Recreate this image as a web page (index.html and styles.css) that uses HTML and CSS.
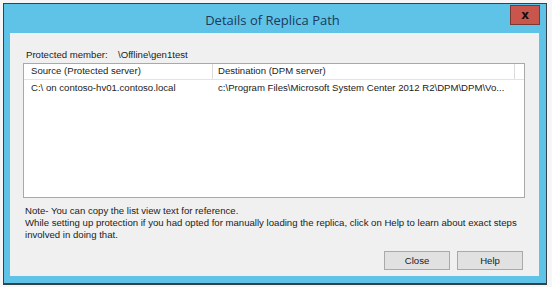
FILE: index.html
```html
<!DOCTYPE html>
<html lang="en">
<head>
  <meta charset="UTF-8" />
  <title>Details of Replica Path</title>
  <link rel="stylesheet" href="styles.css">
</head>
<body>
  <div class="window">
    <div class="titlebar">
      <span></span>
      <h1 class="title">Details of Replica Path</h1>
      <button class="close-x">x</button>
    </div>
    <div class="content">
      <div class="member">
        <span class="member-label">Protected member:</span>
        <span>\Offline\gen1test</span>
      </div>
      <div class="listview">
        <div class="lv-head">
          <div class="col col-src">Source (Protected server)</div>
          <div class="col col-dst">Destination (DPM server)</div>
          <div class="col col-end"></div>
        </div>
        <div class="lv-row">
          <div class="col col-src">C:\ on contoso-hv01.contoso.local</div>
          <div class="col col-dst">c:\Program Files\Microsoft System Center 2012 R2\DPM\DPM\Vo...</div>
        </div>
      </div>
      <p class="note">Note- You can copy the list view text for reference.<br>
        While setting up protection if you had opted for manually loading the replica, click on Help to learn about exact steps involved in doing that.</p>
      <div class="buttons">
        <button class="btn">Close</button>
        <button class="btn">Help</button>
      </div>
    </div>
  </div>
</body>
</html>
```

FILE: styles.css
```css
body {
  margin: 0;
  background-color: #f6f6f6;
  font-family: "Liberation Sans", Arial, sans-serif;
  font-size: 9.6px;
  color: #222;
}

.window {
  margin: 3px 5px 0 3px;
  height: 282px;
  box-sizing: border-box;
  border: 1px solid #34424c;
  border-bottom-width: 2px;
  background-color: #5fc3e8;
  padding: 0 7px 7px 6px;
  display: flex;
  flex-direction: column;
}

.titlebar {
  display: grid;
  grid-template-columns: 1fr auto 1fr;
  height: 29px;
  flex-shrink: 0;
}

.title {
  margin: 0;
  align-self: center;
  font-family: "Open Sans", sans-serif;
  font-weight: normal;
  font-size: 13px;
  color: #1b3a5c;
  padding: 2px 4px 0 0;
}

.close-x {
  justify-self: end;
  align-self: start;
  width: 30px;
  height: 20px;
  margin: 1px -1px 0 0;
  background-color: #c9564d;
  border: 1px solid #7a3a33;
  color: #111;
  font-family: "DejaVu Sans", sans-serif;
  font-weight: bold;
  font-size: 12px;
  line-height: 16px;
  padding: 0;
}

.content {
  flex: 1;
  background-color: #f0f0f0;
  padding: 15px 14px 6px 13px;
  display: flex;
  flex-direction: column;
}

.member {
  display: flex;
  height: 13px;
  align-items: center;
  flex-shrink: 0;
  padding-left: 3px;
}

.member-label {
  width: 92px;
}

.listview {
  margin-top: 2px;
  height: 135px;
  flex-shrink: 0;
  box-sizing: border-box;
  background-color: #fff;
  border: 1px solid #a9a9a9;
}

.lv-head,
.lv-row {
  display: flex;
}

.lv-head {
  height: 15px;
  border-bottom: 1px solid #e3e3e3;
}

.lv-head .col {
  border-right: 1px solid #dcdcdc;
  line-height: 14px;
}

.col {
  padding-left: 7px;
  white-space: nowrap;
  box-sizing: border-box;
}

.col-src {
  width: 189px;
}

.col-dst {
  width: 302px;
  padding-left: 5px;
}

.col-end {
  flex: 1;
  border-right: none !important;
}

.lv-row {
  padding-top: 1px;
}

.lv-row .col {
  line-height: 14px;
}

.note {
  margin: 7px 0 0 2px;
  line-height: 12px;
  flex-shrink: 0;
}

.buttons {
  display: flex;
  justify-content: flex-end;
  gap: 7px;
  margin-top: auto;
  margin-right: 2px;
}

.btn {
  width: 66px;
  height: 19px;
  background-color: #e1e1e1;
  border: 1px solid #a9a9a9;
  font-family: inherit;
  font-size: 9.6px;
  color: #222;
  padding: 0;
}
```
